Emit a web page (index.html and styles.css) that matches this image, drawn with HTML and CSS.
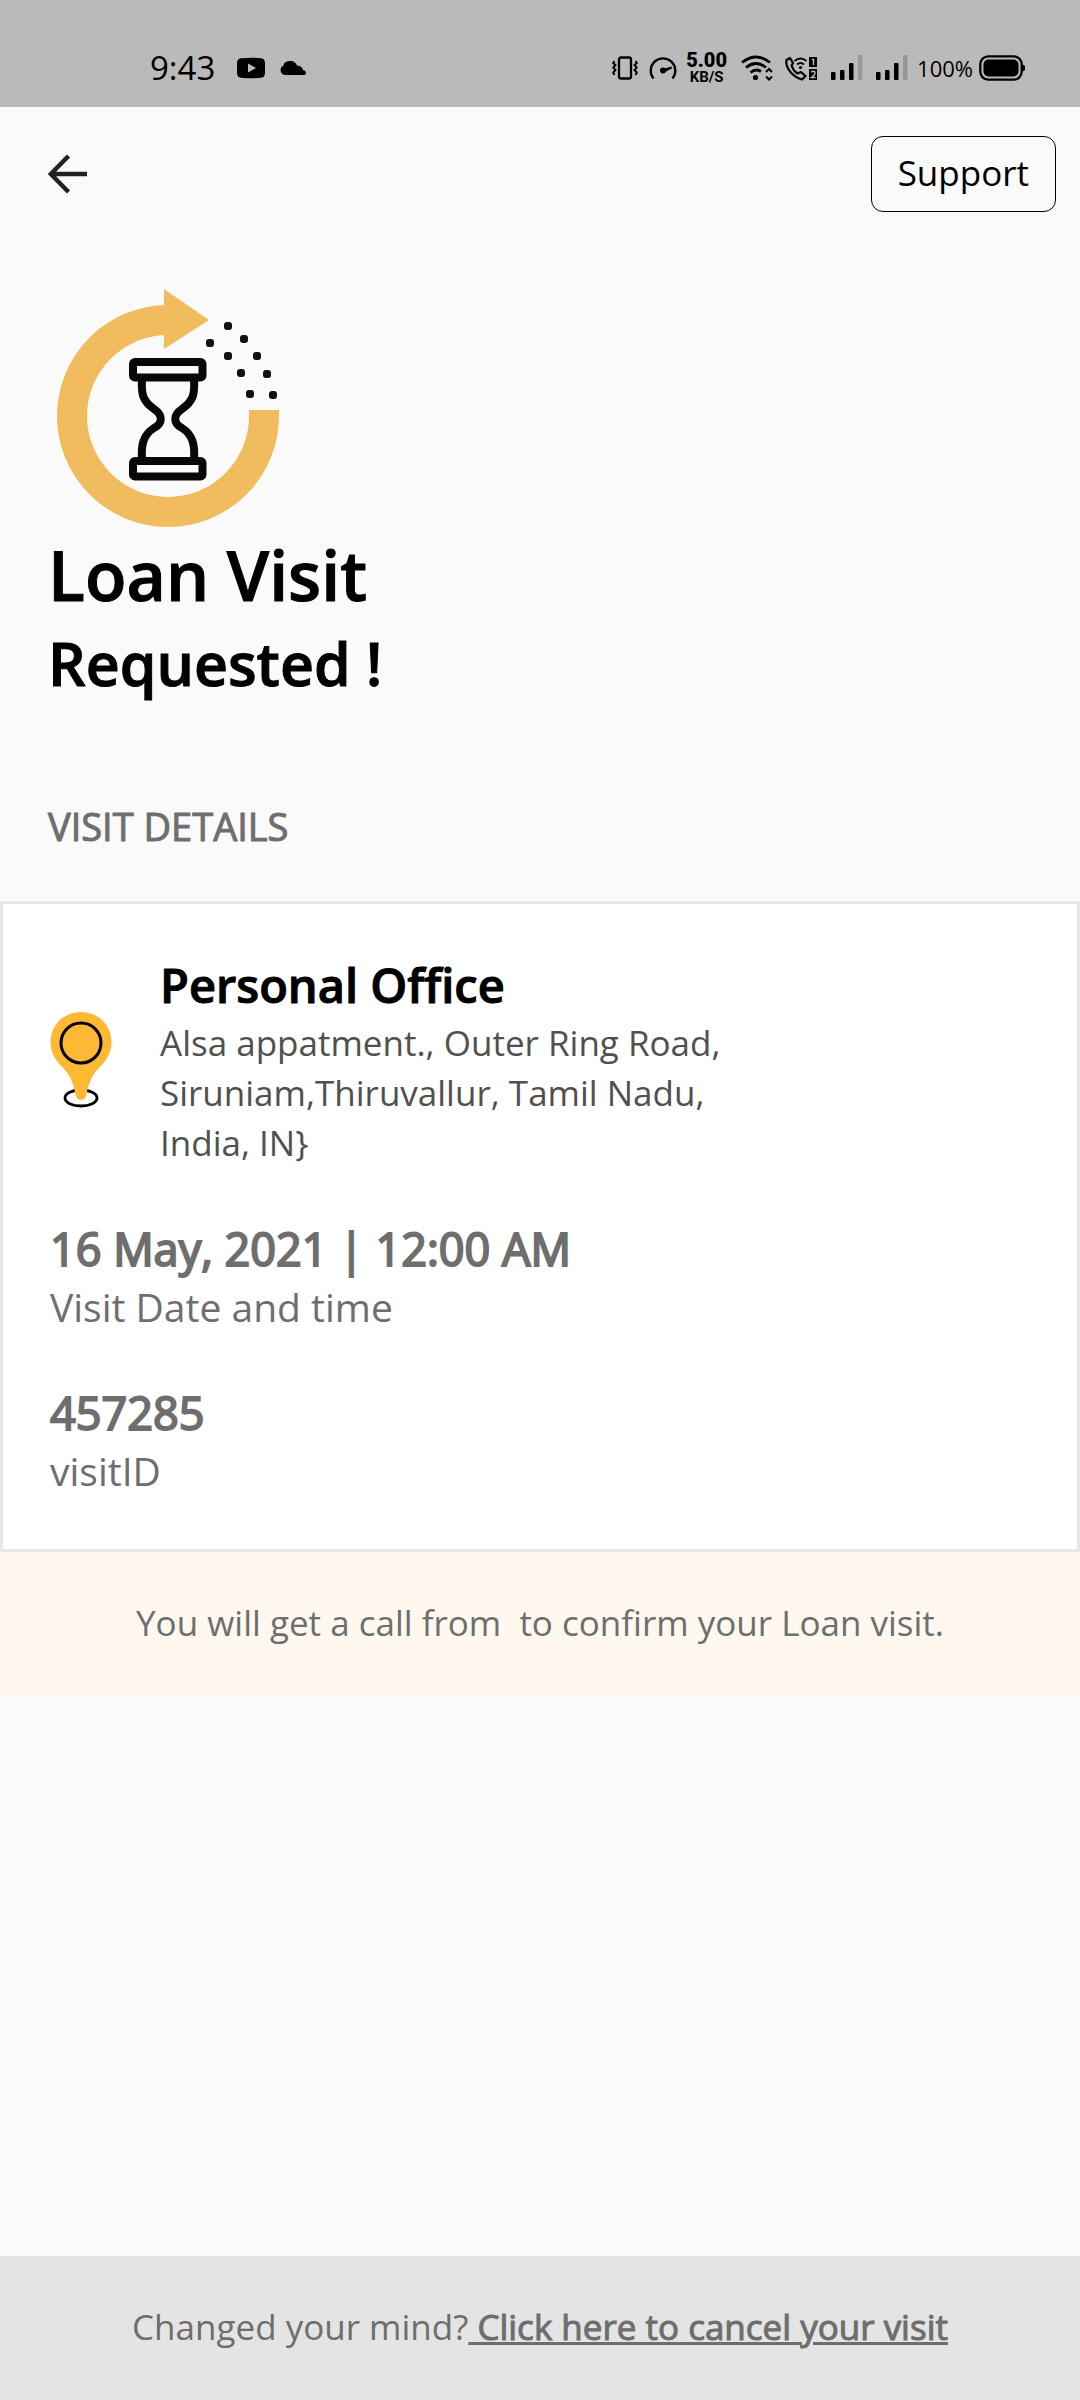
FILE: index.html
```html
<!DOCTYPE html>
<html lang="en">
<head>
<meta charset="utf-8">
<meta name="viewport" content="width=device-width, initial-scale=1">
<title>Loan Visit Requested</title>
<link rel="stylesheet" href="styles.css">
</head>
<body>
<div class="status-bar">
  <div class="status-left">
    <span class="clock">9:43</span>
    <svg class="youtube" width="28" height="22" viewBox="0 0 28 22"><path d="M4 1.3Q14 0 24 1.3Q28 2 28 6V16Q28 20 24 20.7Q14 22 4 20.7Q0 20 0 16V6Q0 2 4 1.3Z"/><path d="M11 6.5L19 11L11 15.5Z" fill="#bababa"/></svg>
    <svg width="26" height="22" viewBox="0 0 26 22"><path d="M5 18A5 5 0 0 1 3.500 8.500C4 5 7.500 4 10 4C14 4 16 6 17 8.500C20 8.500 22.500 10 23 13C25 13.500 26 14.500 26 16C26 17.500 25 18 23.500 18Z"/></svg>
  </div>
  <div class="status-right">
    <svg width="26" height="24" viewBox="0 0 26 24" fill="none" stroke="#000" stroke-width="2.300"><rect x="7" y="1.500" width="12" height="21" rx="2"/><path d="M2.500 5L1.200 7L3.500 9L1.200 11.500L3.500 14L1.200 16.500L2.500 19M23.500 5L24.800 7L22.500 9L24.800 11.500L22.500 14L24.800 16.500L23.500 19" stroke-width="1.900"/></svg>
    <svg class="gauge" width="28" height="26" viewBox="0 0 28 26"><path d="M4.500 23.500A12.300 12.300 0 1 1 23.500 23.500" fill="none" stroke="#000" stroke-width="2.300"/><circle cx="14" cy="15.500" r="3"/><path d="M14 14L22.500 11.500L23 13.500L15 17.500Z"/></svg>
    <span class="speed"><b>5.00</b><span>KB/S</span></span>
    <svg class="wifi" width="32" height="26" viewBox="0 0 32 26" fill="none" stroke="#000" stroke-width="2.800"><path d="M1 7.500Q15 -3.500 29 7.500M5 12.500Q15 4.500 25 12.500M9.500 17.500Q15 13 20 16.500"/><circle cx="14.500" cy="22.500" r="2.600" fill="#000" stroke="none"/><path d="M25 17L28 14L31 17M25 21.500L28 24.500L31 21.500" stroke-width="2"/></svg>
    <svg class="call" width="34" height="26" viewBox="0 0 34 26"><path d="M6 3L2.500 5C1 12 8 22 18 24.500L21.500 21L17 17L13.500 18.500C10.500 16.500 8.500 13.500 7.500 10.500L9 8Z" fill="none" stroke="#000" stroke-width="2.200" stroke-linejoin="round"/><path d="M10.500 6Q16.500 1 22.500 6M13 9.500Q16.500 6.500 20 9.500" fill="none" stroke="#000" stroke-width="1.800"/><circle cx="16.500" cy="12.500" r="1.600"/><path d="M25 2H33V12H25ZM25 14H33V25H25Z"/><path d="M28 4.500H29.500V10M27 17Q31 15 31 18Q31 19.500 27.500 22.500H31.500" fill="none" stroke="#bababa" stroke-width="1.400"/></svg>
    <svg class="signal" width="32" height="26" viewBox="0 0 32 26"><rect y="17" width="4.500" height="8" rx="1"/><rect x="9" y="15" width="4.500" height="10" rx="1"/><rect x="18" y="8" width="4.500" height="17" rx="1"/><rect x="27" width="4.500" height="25" rx="1" fill="#979797"/></svg>
    <svg class="signal" width="32" height="26" viewBox="0 0 32 26"><rect y="17" width="4.500" height="8" rx="1"/><rect x="9" y="15" width="4.500" height="10" rx="1"/><rect x="18" y="8" width="4.500" height="17" rx="1"/><rect x="27" width="4.500" height="25" rx="1" fill="#979797"/></svg>
    <span class="charge">100%</span>
    <svg width="46" height="26" viewBox="0 0 46 26"><rect x="1.300" y="1.300" width="41.400" height="23.400" rx="8" fill="none" stroke="#000" stroke-width="2.300"/><rect x="4.500" y="4.500" width="35" height="17" rx="5"/><path d="M43 9L46 11V15L43 17Z"/></svg>
  </div>
</div>

<header class="app-header">
  <button class="back" type="button" aria-label="Back"><svg width="40" height="40" viewBox="0 0 40 40" fill="none" stroke="#212121" stroke-width="4.500"><path d="M39 20H4M20.500 2L2.800 20L20.500 38"/></svg></button>
  <button class="support" type="button">Support</button>
</header>

<main>
  <section class="hero">
    <svg width="222" height="240" viewBox="0 0 222 240">
      <path d="M111 31A96 96 0 1 0 207 127V121" fill="none" stroke="#f0bc5e" stroke-width="30"/>
      <path d="M107 0L152 31L107 60Z" fill="#f0bc5e"/>
      <g fill="none" stroke="#080808" stroke-width="8" stroke-linejoin="round">
        <rect x="76" y="73" width="69.500" height="15.500" rx="2"/>
        <rect x="76" y="172" width="69.500" height="15.500" rx="2"/>
        <path d="M85 90C84 106 86 112 97 120C106 126 106 134 97 139C86 146 84 156 85 171M137 90C138 106 136 112 125 120C116 126 116 134 125 139C136 146 138 156 137 171"/>
      </g>
      <g fill="#111"><rect x="167" y="33" width="8" height="8" rx="3"/><rect x="183" y="46" width="8" height="8" rx="3"/><rect x="149" y="50" width="8" height="8" rx="3"/><rect x="167" y="63" width="8" height="8" rx="3"/><rect x="196" y="63" width="8" height="8" rx="3"/><rect x="180" y="80" width="8" height="8" rx="3"/><rect x="206" y="81" width="8" height="8" rx="3"/><rect x="189" y="101" width="8" height="8" rx="3"/><rect x="212" y="102" width="8" height="8" rx="3"/></g>
    </svg>
    <h1><span class="title">Loan Visit</span><span class="subtitle">Requested !</span></h1>
  </section>

  <h2 class="section-label">VISIT DETAILS</h2>

  <section class="card">
    <div class="place">
      <svg width="64" height="98" viewBox="0 0 64 98"><ellipse cx="31" cy="86" rx="16" ry="8" fill="none" stroke="#000" stroke-width="2.800"/><path d="M31 0C48 0 61.500 13 61.500 30C61.500 43 54 51 47 58C41 65 38 73 36.500 83Q35 88 31 88Q27 88 25.500 83C24 73 21 65 15 58C8 51 .500 43 .500 30C.500 13 14 0 31 0Z" fill="#ffb833"/><circle cx="31" cy="31" r="20" fill="none" stroke="#000" stroke-width="3"/></svg>
      <div>
        <h3>Personal Office</h3>
        <p class="address">Alsa appatment., Outer Ring Road,<br>Siruniam,Thiruvallur, Tamil Nadu,<br>India, IN}</p>
      </div>
    </div>
    <dl class="facts">
      <div><dd>16 May, 2021 | 12:00 AM</dd><dt>Visit Date and time</dt></div>
      <div><dd>457285</dd><dt>visitID</dt></div>
    </dl>
  </section>
  <p class="notice">You will get a call from &nbsp;to confirm your Loan visit.</p>
</main>

<footer class="cancel">Changed your mind?<a href="#cancel">&nbsp;Click here to cancel your visit</a></footer>
</body>
</html>
```
FILE: styles.css
```css
* { box-sizing: border-box; }

body {
  margin: 0;
  min-height: 100vh;
  display: flex;
  flex-direction: column;
  background: #fafafa;
  color: #6e6e6e;
  font-family: "Open Sans", "Noto Sans", sans-serif;
  font-size: 35px;
  line-height: 50px;
}

h1, h2, h3, p, dl, dd { margin: 0; }
svg { display: block; flex: none; }

.status-bar {
  display: flex;
  justify-content: space-between;
  align-items: center;
  padding: 44px 55px 15px 150px;
  background: #bababa;
  color: #000;
  line-height: 48px;
}
.status-left, .status-right { display: flex; align-items: center; }
.status-left { gap: 15px; }
.clock { font-size: 33px; }
.youtube { margin-left: 7px; }
.gauge { margin-left: 11px; }
.speed {
  display: flex;
  flex-direction: column;
  align-items: center;
  margin-left: 9px;
  font-family: Roboto, sans-serif;
  font-size: 15px;
  font-weight: 700;
  line-height: 15px;
}
.speed b { font-size: 20px; line-height: 19px; }
.wifi { margin-left: 14px; }
.call { margin-left: 11px; }
.signal { margin-left: 13px; }
.charge { margin: 0 6px 0 9px; font-size: 22px; }

.app-header {
  display: flex;
  justify-content: space-between;
  align-items: center;
  padding: 29px 24px 0 48px;
}
button { font: inherit; color: #000; background: none; cursor: pointer; }
.back { padding: 0; border: 0; }
.support { padding: 11px 26px 13px; border: 1px solid #000; border-radius: 12px; }

.hero { padding: 77px 48px 0; }
.hero svg { margin-left: 9px; }
h1, h3 {
  color: #000;
  font-weight: 600;
  -webkit-text-stroke: 1px currentColor;
}
.title, .subtitle { display: block; }
.title { font-size: 68px; line-height: 91px; }
.subtitle { font-size: 59px; line-height: 86px; }

/* Emphasis keeps the regular letter widths and thickens the strokes */
.section-label, dd, .cancel a {
  font-weight: 400;
  -webkit-text-stroke: 1px currentColor;
}

.section-label {
  padding: 96px 48px 51px;
  font-size: 38px;
  line-height: 48px;
}

.card {
  padding: 49px 47px 52px;
  background: #fff;
  border: 3px solid #e6e6e6;
}
.place { display: flex; align-items: center; gap: 46px; }
h3 { font-size: 47px; line-height: 65px; }
.address { color: #505050; }
.facts { display: flex; flex-direction: column; gap: 48px; padding-top: 49px; }
.facts div { display: flex; flex-direction: column; }
dd { font-size: 45px; line-height: 63px; -webkit-text-stroke-width: 2px; }
dt { font-size: 39px; line-height: 53px; }

.notice { padding: 46px 24px 49px; background: #fff8ee; text-align: center; }

.cancel {
  margin-top: auto;
  padding: 46px 24px 48px;
  background: #e4e4e4;
  text-align: center;
}
.cancel a { color: inherit; }
```
